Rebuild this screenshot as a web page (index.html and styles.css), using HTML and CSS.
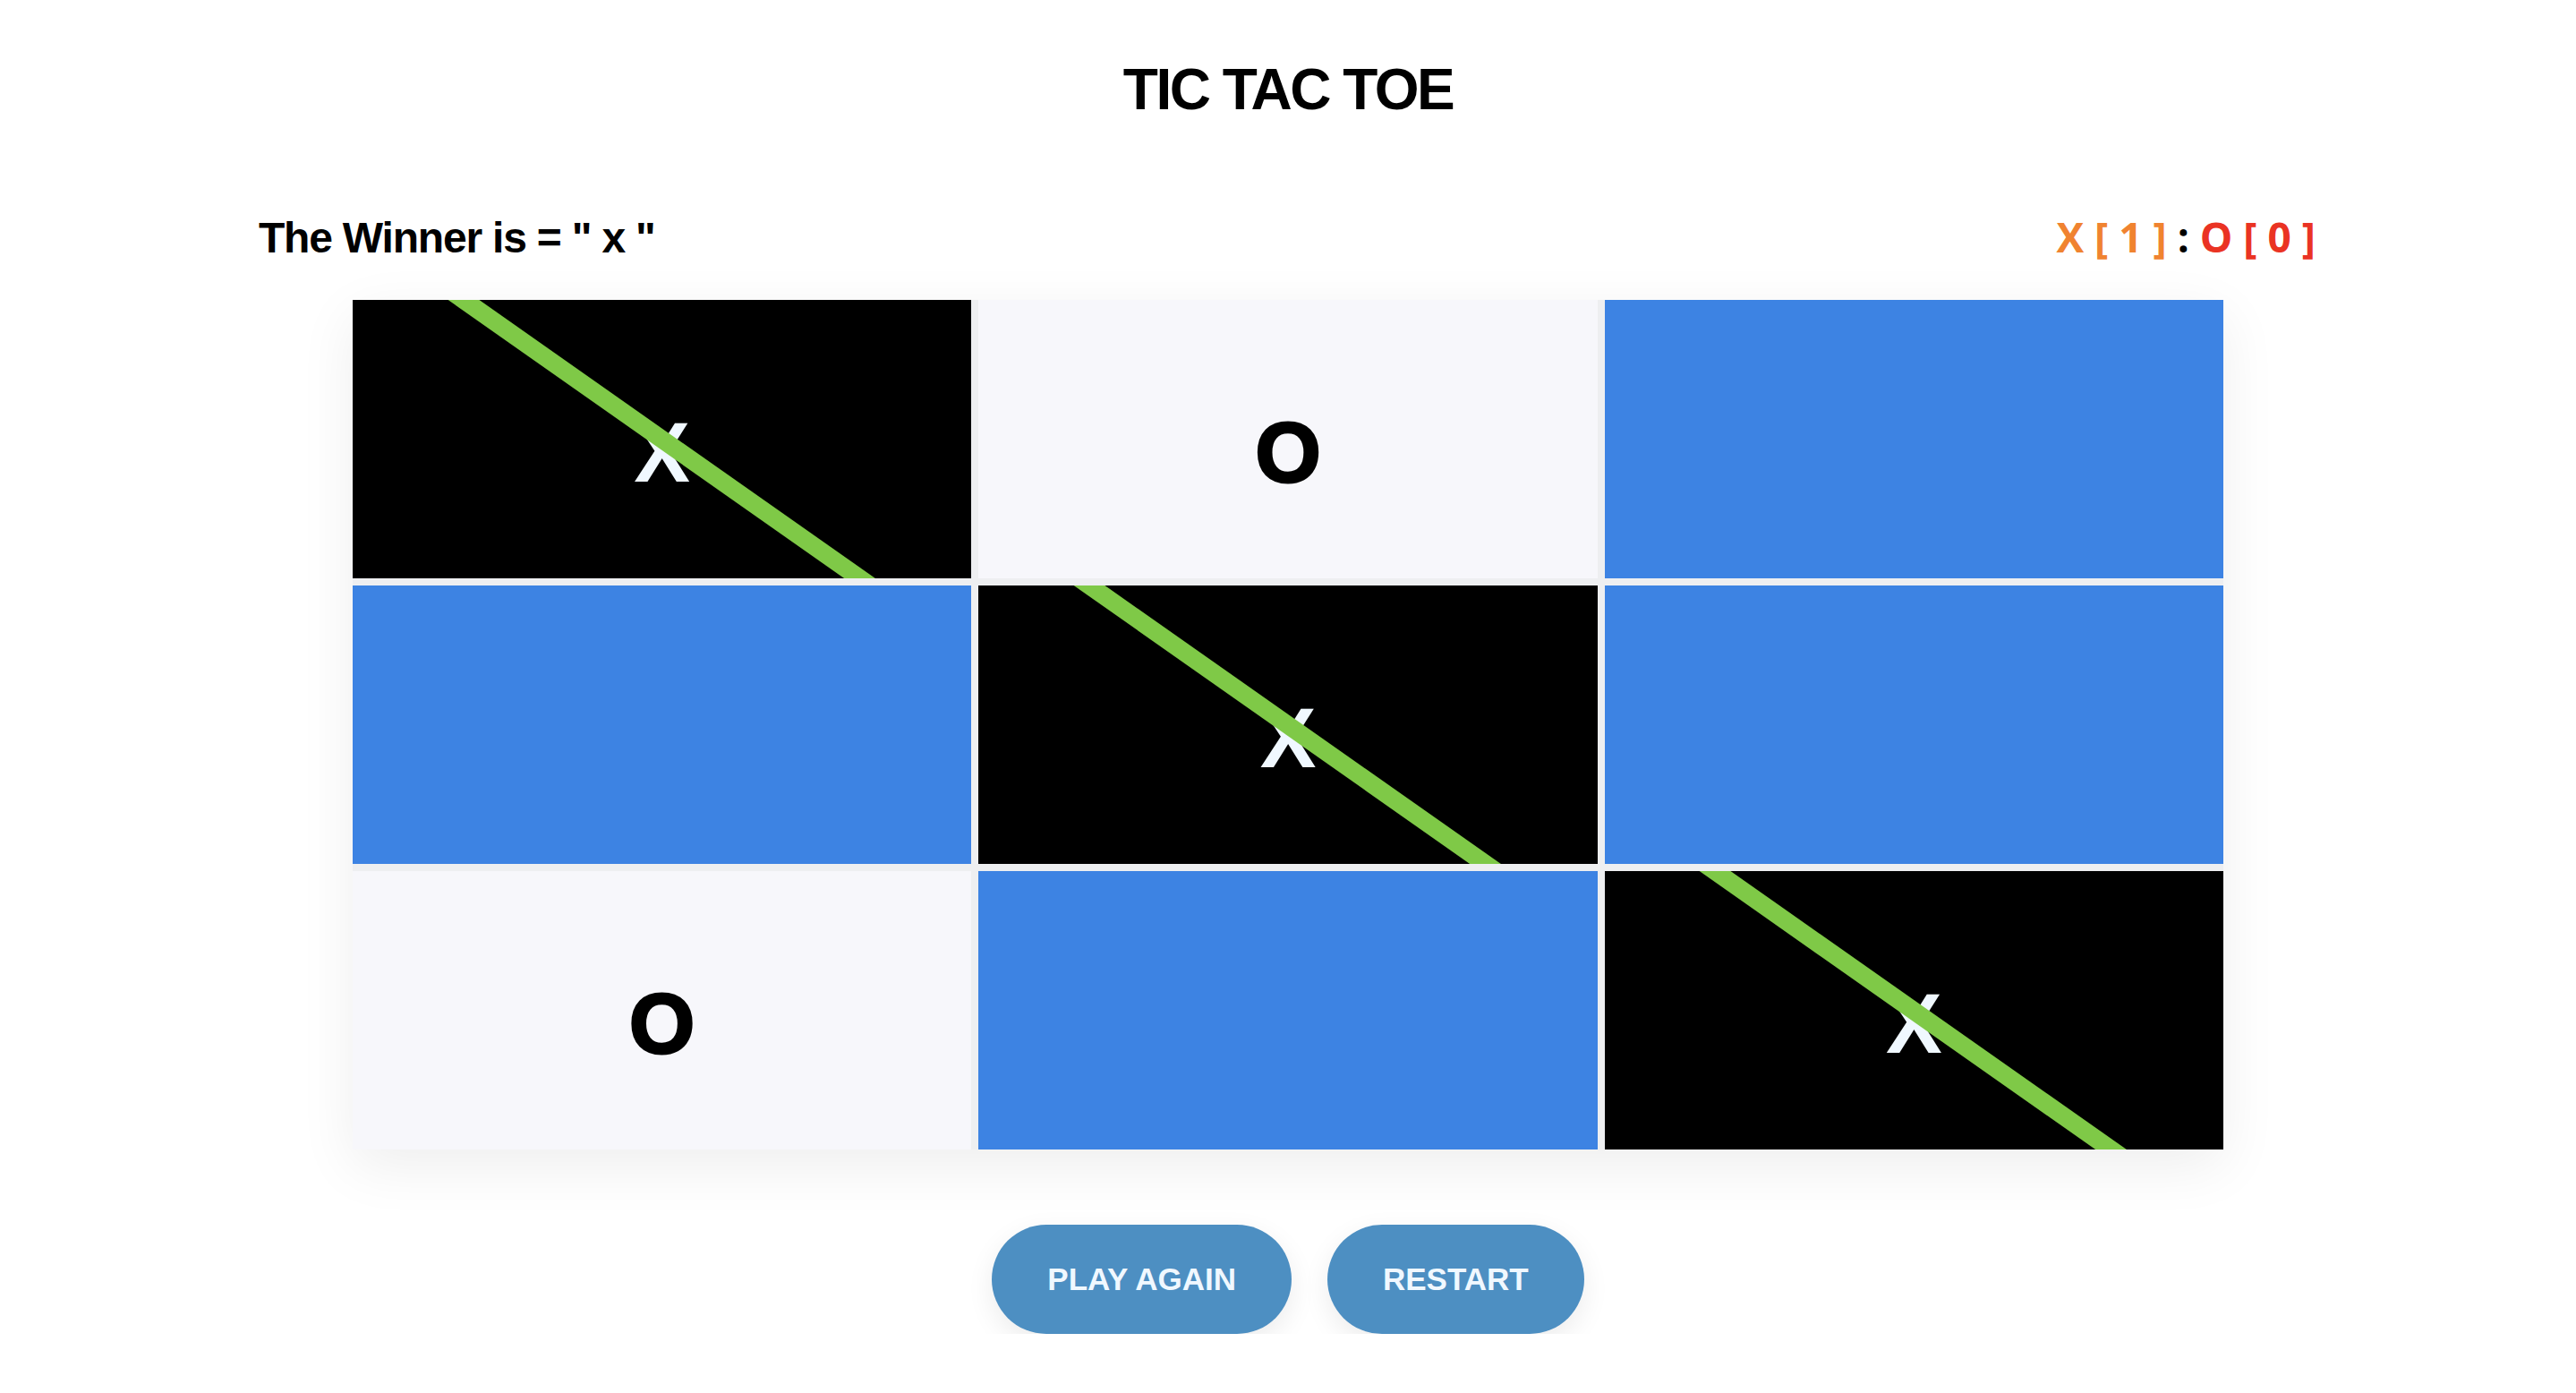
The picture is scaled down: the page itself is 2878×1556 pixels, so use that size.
FILE: index.html
```html
<!DOCTYPE html>
<html lang="en">
<head>
<meta charset="utf-8">
<title>Tic Tac Toe</title>
<link rel="stylesheet" href="styles.css">
</head>
<body>
  <h1 class="title">TIC TAC TOE</h1>
  <div class="status">
    <div class="winner">The Winner is = " x "</div>
    <div class="score"><span class="sx">X [ 1 ]</span> <span class="colon">:</span> <span class="so">O [ 0 ]</span></div>
  </div>
  <div class="board">
    <div class="cell cell-x win"><span class="mark">X</span></div>
    <div class="cell cell-o"><span class="mark">O</span></div>
    <div class="cell cell-empty"></div>
    <div class="cell cell-empty"></div>
    <div class="cell cell-x win"><span class="mark">X</span></div>
    <div class="cell cell-empty"></div>
    <div class="cell cell-o"><span class="mark">O</span></div>
    <div class="cell cell-empty"></div>
    <div class="cell cell-x win"><span class="mark">X</span></div>
  </div>
  <div class="actions">
    <button class="btn">PLAY AGAIN</button>
    <button class="btn">RESTART</button>
  </div>
</body>
</html>
```
FILE: styles.css
```css
html, body {
  margin: 0;
  padding: 0;
  background: #ffffff;
}
body {
  font-family: "Liberation Sans", Arial, sans-serif;
  color: #000;
}
.title {
  margin: 69px 0 0;
  font-size: 64px;
  line-height: 62px;
  font-weight: 700;
  letter-spacing: -2.5px;
  text-align: center;
}
.status {
  width: 2300px;
  margin: 109px auto 0;
  height: 48px;
  display: flex;
  justify-content: space-between;
  align-items: baseline;
}
.winner {
  font-size: 48px;
  line-height: 48px;
  font-weight: 700;
  letter-spacing: -1.2px;
}
.score {
  font-family: "Open Sans", sans-serif;
  font-size: 46px;
  line-height: 48px;
  font-weight: 700;
  margin-right: 2px;
}
.sx { color: #f08330; }
.so { color: #ea3323; }
.colon { color: #000; }
.board {
  width: 2090px;
  margin: 47px auto 0;
  display: grid;
  grid-template-columns: repeat(3, 1fr);
  grid-template-rows: repeat(3, 311px);
  gap: 8px;
  background: #eeeff1;
  box-shadow: 0 18px 60px rgba(0, 0, 0, 0.07);
}
.cell {
  position: relative;
  overflow: hidden;
  display: flex;
  align-items: center;
  justify-content: center;
  padding-top: 30px;
  box-sizing: border-box;
}
.cell-x { background: #000; }
.cell-o { background: #f7f7fb; }
.cell-empty { background: #3d83e3; }
.mark {
  font-family: "Liberation Sans", Arial, sans-serif;
  font-size: 94px;
  font-weight: 700;
  line-height: 1;
}
.cell-x .mark { color: #f0f8ff; }
.cell-o .mark { color: #000; -webkit-text-stroke: 3px #000; }
.win::after {
  content: "";
  position: absolute;
  left: 50%;
  top: 50%;
  width: 1000px;
  height: 20px;
  margin-left: -500px;
  margin-top: -10px;
  background: #7fc947;
  transform: rotate(35.1deg);
}
.actions {
  margin-top: 84px;
  display: flex;
  justify-content: center;
  gap: 40px;
}
.btn {
  height: 122px;
  padding: 0 62px;
  border: none;
  border-radius: 61px;
  background: #4d8fc2;
  color: #f0f8ff;
  font-family: "Liberation Sans", Arial, sans-serif;
  font-size: 35px;
  font-weight: 700;
  box-shadow: 0 10px 30px rgba(0, 0, 0, 0.08);
  cursor: pointer;
}
```
